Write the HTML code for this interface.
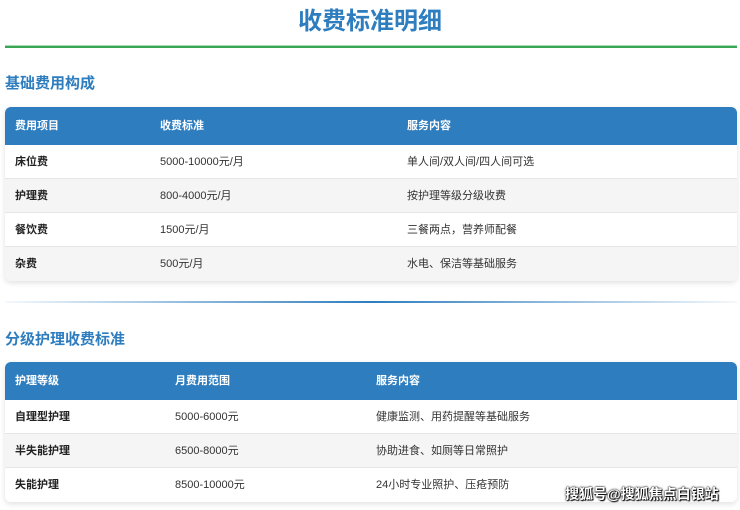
<!DOCTYPE html>
<html><head><meta charset="utf-8"><style>
*{margin:0;padding:0;box-sizing:border-box}
body{width:740px;height:510px;overflow:hidden;background:#fff;font-family:"Liberation Sans","Noto Sans CJK SC",sans-serif;position:relative;color:#333}
.title{position:absolute;top:1px;left:0;width:740px;text-align:center;font-size:24px;font-weight:bold;color:#2e7dbf}
.gl{position:absolute;left:5px;top:45px;width:732px;height:3px;background:#3aa655;border-top:1px solid #a8dcb4}
h2{position:absolute;left:5px;font-size:15px;font-weight:bold;color:#2e7dbf}
.tb{position:absolute;left:5px;width:732px;border-radius:6px;overflow:hidden;box-shadow:0 2px 6px rgba(0,0,0,.12)}
.r{position:relative;height:34px;font-size:11px;line-height:35px;border-bottom:1px solid #e6e6e6}
.r span{position:absolute;top:0}
.h{height:38px;line-height:38px;background:#2e7dbf;color:#fff;font-weight:bold;border:none}
.g{background:#f5f5f5}
.b{font-weight:bold;color:#222}
.sep{position:absolute;left:5px;top:301px;width:732px;height:2px;background:linear-gradient(90deg,rgba(46,125,191,0.05),#2e7dbf,rgba(46,125,191,0.05))}
.wm{position:absolute;left:565px;top:484px;font-size:14px;font-weight:bold;color:#fff;text-shadow:0 0 2px #000,0 0 1px #000,1px 1px 1px #000}
</style></head><body>
<div class="title">收费标准明细</div>
<div class="gl"></div>
<h2 style="top:72px">基础费用构成</h2>
<div class="tb" style="top:107px">
<div class="r h"><span style="left:10px">费用项目</span><span style="left:155px">收费标准</span><span style="left:402px">服务内容</span></div>
<div class="r"><span class="b" style="left:10px">床位费</span><span style="left:155px">5000-10000元/月</span><span style="left:402px">单人间/双人间/四人间可选</span></div>
<div class="r g"><span class="b" style="left:10px">护理费</span><span style="left:155px">800-4000元/月</span><span style="left:402px">按护理等级分级收费</span></div>
<div class="r"><span class="b" style="left:10px">餐饮费</span><span style="left:155px">1500元/月</span><span style="left:402px">三餐两点，营养师配餐</span></div>
<div class="r g" style="border:none"><span class="b" style="left:10px">杂费</span><span style="left:155px">500元/月</span><span style="left:402px">水电、保洁等基础服务</span></div>
</div>
<div class="sep"></div>
<h2 style="top:328px">分级护理收费标准</h2>
<div class="tb" style="top:362px">
<div class="r h"><span style="left:10px">护理等级</span><span style="left:170px">月费用范围</span><span style="left:371px">服务内容</span></div>
<div class="r"><span class="b" style="left:10px">自理型护理</span><span style="left:170px">5000-6000元</span><span style="left:371px">健康监测、用药提醒等基础服务</span></div>
<div class="r g"><span class="b" style="left:10px">半失能护理</span><span style="left:170px">6500-8000元</span><span style="left:371px">协助进食、如厕等日常照护</span></div>
<div class="r" style="border:none"><span class="b" style="left:10px">失能护理</span><span style="left:170px">8500-10000元</span><span style="left:371px">24小时专业照护、压疮预防</span></div>
</div>
<div class="wm">搜狐号@搜狐焦点白银站</div>
</body></html>
